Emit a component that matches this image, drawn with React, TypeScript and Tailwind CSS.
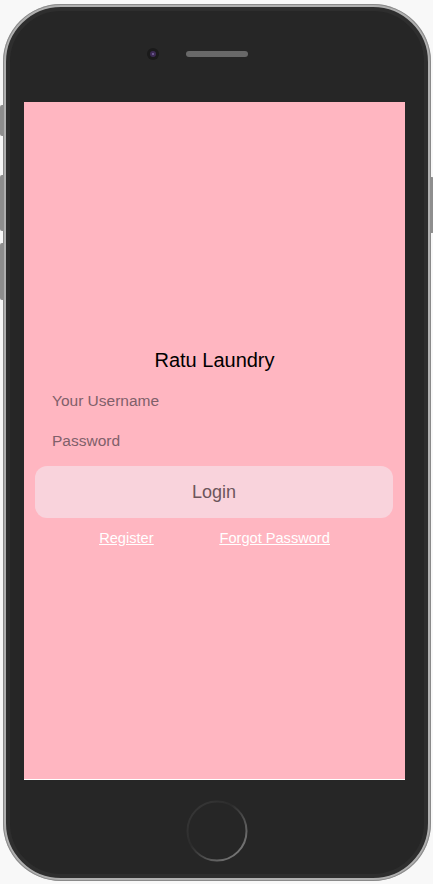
import { useState } from 'react'

const FONT = { fontFamily: '"Liberation Sans", Arial, sans-serif' }

function Camera() {
  return (
    <div className="w-[12px] h-[12px] rounded-full bg-[#1a1a1a] flex items-center justify-center">
      <div className="w-[6px] h-[6px] rounded-full bg-[#3d2a55] flex items-center justify-center">
        <div className="w-[2px] h-[2px] rounded-full bg-[#7a68a0]" />
      </div>
    </div>
  )
}

function HomeButton() {
  return (
    <svg width="64" height="64" viewBox="0 0 64 64">
      <defs>
        <linearGradient id="hb" x1="0" y1="0" x2="1" y2="1">
          <stop offset="0" stopColor="#3a3a3a" />
          <stop offset="0.4" stopColor="#2c2c2c" />
          <stop offset="1" stopColor="#8a8a8a" />
        </linearGradient>
      </defs>
      <circle cx="32" cy="32" r="29.5" fill="none" stroke="url(#hb)" strokeWidth="2" />
    </svg>
  )
}

export default function App() {
  const [username, setUsername] = useState('')
  const [password, setPassword] = useState('')

  return (
    <div className="w-[433px] h-[884px] bg-[#f8f8f8] pt-[4px] pl-[3px]" style={FONT}>
      <div className="relative w-[428px] h-[877px]">
        {/* side buttons */}
        <div className="absolute left-[-3px] top-[101px] w-[4px] h-[31px] rounded-l-[2px] bg-[#8e8e8e]" />
        <div className="absolute left-[-3px] top-[171px] w-[4px] h-[56px] rounded-l-[2px] bg-[#8e8e8e]" />
        <div className="absolute left-[-3px] top-[239px] w-[4px] h-[57px] rounded-l-[2px] bg-[#8e8e8e]" />
        <div className="absolute right-[-3px] top-[173px] w-[4px] h-[56px] rounded-r-[2px] bg-[#8e8e8e]" />

        <div className="w-full h-full rounded-[58px] bg-[#b0b0b0] p-[3px] shadow-[inset_0_0_0_1px_#8a8a8a]">
          <div className="w-full h-full rounded-[55px] bg-[#262626] border-[4px] border-[#2e2e2e] flex flex-col items-start">
            {/* top bezel */}
            <div className="h-[91px] w-full flex items-start pt-[37px] pl-[137px]">
              <div className="flex items-center gap-[27px]">
                <Camera />
                <div className="w-[62px] h-[6px] rounded-full bg-[#5a5a5a] bg-[radial-gradient(#7a7a7a_0.6px,transparent_0.8px)] bg-[length:2px_2px]" />
              </div>
            </div>

            {/* screen */}
            <div className="ml-[14px] w-[381px] h-[678px] bg-[#ffb6c1] border-b border-white flex flex-col items-center justify-center pt-[16px]">
              <h1 className="text-[20px] leading-[24px] text-black">Ratu Laundry</h1>
              <div className="w-full mt-[9px] flex flex-col">
                <input
                  value={username}
                  onChange={e => setUsername(e.target.value)}
                  placeholder="Your Username"
                  className="h-[40px] w-full bg-transparent px-[28px] text-[15.5px] text-black outline-none placeholder:text-[#80606a]"
                />
                <input
                  type="password"
                  value={password}
                  onChange={e => setPassword(e.target.value)}
                  placeholder="Password"
                  className="h-[40px] w-full bg-transparent px-[28px] text-[15.5px] text-black outline-none placeholder:text-[#80606a]"
                />
              </div>
              <button className="mt-[5px] w-[358px] h-[52px] rounded-[12px] bg-[#f9d3dc] text-[18px] text-[#6d555b] -ml-[1px]">
                Login
              </button>
              <div className="mt-[11px] h-[20px] flex items-center justify-center gap-[66px] text-[14.6px] text-white underline">
                <a href="#">Register</a>
                <a href="#">Forgot Password</a>
              </div>
            </div>

            {/* bottom bezel */}
            <div className="flex-1 w-full flex items-center justify-center pt-[7px] pr-[1px]">
              <HomeButton />
            </div>
          </div>
        </div>
      </div>
    </div>
  )
}
